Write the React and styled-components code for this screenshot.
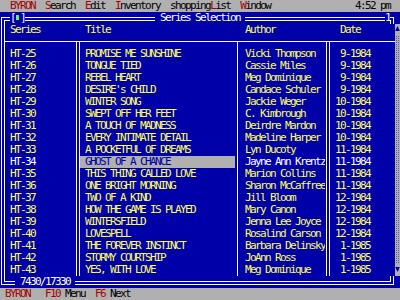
import React from 'react';
import styled, { createGlobalStyle } from 'styled-components';

const C = {
  blue: '#0000a8',
  yellow: '#ffff55',
  white: '#ffffff',
  gray: '#b0b0b0',
  red: '#a80000',
  black: '#000000',
  green: '#55ff55',
  dot: '#5858b0',
};

const seg = (x, y, w, h) =>
  `linear-gradient(${C.white}, ${C.white}) ${x}px ${y}px / ${w}px ${h}px no-repeat`;

const Global = createGlobalStyle`
  html, body { margin: 0; padding: 0; background: ${C.black}; }
  body {
    font-family: "DejaVu Sans Mono", "Liberation Mono", monospace;
    font-size: 11px;
    letter-spacing: -1.622px;
    line-height: 12px;
    white-space: pre;
  }
`;

const Screen = styled.div`
  width: 400px;
  height: 300px;
  display: flex;
  flex-direction: column;
  overflow: hidden;
  background: ${C.blue};
`;

const Bar = styled.div`
  height: 12px;
  flex: none;
  display: flex;
  align-items: center;
  background: ${C.gray};
  color: ${C.black};
`;

const MenuBar = styled(Bar)`
  padding-left: 10px;
  gap: 10px;
`;

const Hot = styled.span`
  color: ${C.red};
`;

const MenuLabel = styled.span``;

const Clock = styled.span`
  margin-left: auto;
  padding-right: 10px;
`;

const StatusBar = styled(Bar)`
  padding-left: 5px;
  gap: 10px;
`;

const Brand = styled.span`
  color: ${C.red};
  margin-right: 5px;
`;

const Window = styled.div`
  flex: 1;
  display: flex;
  flex-direction: column;
  background: ${C.blue};
  color: ${C.white};
`;

const FrameRow = styled.div`
  height: 12px;
  flex: none;
  display: flex;
`;

const corners = {
  tl: [seg(1, 5, 4, 1), seg(1, 5, 1, 7), seg(4, 8, 1, 1), seg(4, 8, 1, 4)],
  tr: [seg(0, 5, 4, 1), seg(3, 5, 1, 7), seg(0, 8, 1, 4)],
  bl: [seg(1, 0, 1, 9), seg(1, 8, 4, 1), seg(4, 0, 1, 6), seg(4, 5, 1, 1)],
  br: [seg(3, 0, 1, 9), seg(0, 8, 4, 1), seg(0, 0, 1, 6)],
};

const Corner = styled.span`
  width: 5px;
  flex: none;
  background: ${(p) => corners[p.$at].join(', ')};
`;

const HLine = styled.span`
  flex: ${(p) => (p.$w ? 'none' : '1')};
  width: ${(p) => (p.$w ? `${p.$w}px` : 'auto')};
  background: ${seg(0, 5, 9999, 1)}, ${seg(0, 8, 9999, 1)};
`;

const Blank = styled.span`
  width: 5px;
  flex: none;
`;

const Glyph = styled.span`
  width: 5px;
  flex: none;
  display: flex;
  align-items: center;
  justify-content: center;
  color: ${C.white};
`;

const CloseBox = styled.span`
  display: block;
  width: 3px;
  height: 5px;
  background: ${C.green};
  margin-top: -1px;
`;

const Caption = styled.span`
  padding: 0 5px;
  color: ${C.white};
  flex: none;
`;

const Middle = styled.div`
  flex: 1;
  display: flex;
  min-height: 0;
`;

const LeftEdge = styled.div`
  width: 5px;
  flex: none;
  background: ${seg(1, 0, 1, 9999)}, ${seg(4, 0, 1, 9999)};
`;

const Table = styled.div`
  width: 390px;
  flex: none;
  display: flex;
  flex-direction: column;
`;

const COLS = '70px 5px 155px 5px 85px 5px 65px';

const Row = styled.div`
  height: 12px;
  display: grid;
  grid-template-columns: ${COLS};
`;

const RuleRow = styled(Row)`
  background: ${seg(0, 5, 9999, 1)};
`;

const Sep = styled.span`
  background: ${(p) =>
    p.$double
      ? `${seg(1, p.$from || 0, 1, 9999)}, ${seg(4, p.$from || 0, 1, 9999)}`
      : seg(2, p.$from || 0, 1, 9999)};
`;

const Cell = styled.span`
  color: ${(p) => (p.$sel ? C.white : C.yellow)};
  padding-left: ${(p) => p.$pl ?? 5}px;
  padding-right: ${(p) => p.$pr ?? 0}px;
  text-align: ${(p) => (p.$right ? 'right' : 'left')};
  overflow: hidden;
`;

const TitleCell = styled(Cell)`
  background: ${(p) => (p.$sel ? C.gray : 'transparent')};
  color: ${(p) => (p.$sel ? C.blue : C.yellow)};
`;

const ScrollBar = styled.div`
  width: 5px;
  flex: none;
  display: flex;
  flex-direction: column;
`;

const Arrow = styled.div`
  height: 12px;
  flex: none;
  background: ${C.gray};
  display: flex;
`;

const Track = styled.div`
  flex: 1;
  background: repeating-conic-gradient(${C.dot} 0 25%, transparent 0 100%) 0 0 / 2px 2px,
    ${C.gray};
`;

const books = [
  ['HT-25', 'PROMISE ME SUNSHINE', 'Vicki Thompson', '9-1984'],
  ['HT-26', 'TONGUE TIED', 'Cassie Miles', '9-1984'],
  ['HT-27', 'REBEL HEART', 'Meg Dominique', '9-1984'],
  ['HT-28', "DESIRE's CHILD", 'Candace Schuler', '9-1984'],
  ['HT-29', 'WINTER SONG', 'Jackie Weger', '10-1984'],
  ['HT-30', 'SWEPT OFF HER FEET', 'C. Kimbrough', '10-1984'],
  ['HT-31', 'A TOUCH OF MADNESS', 'Deirdre Mardon', '10-1984'],
  ['HT-32', 'EVERY INTIMATE DETAIL', 'Madeline Harper', '10-1984'],
  ['HT-33', 'A POCKETFUL OF DREAMS', 'Lyn Ducoty', '11-1984'],
  ['HT-34', 'GHOST OF A CHANCE', 'Jayne Ann Krentz', '11-1984'],
  ['HT-35', 'THIS THING CALLED LOVE', 'Marion Collins', '11-1984'],
  ['HT-36', 'ONE BRIGHT MORNING', 'Sharon McCaffree', '11-1984'],
  ['HT-37', 'TWO OF A KIND', 'Jill Bloom', '12-1984'],
  ['HT-38', 'HOW THE GAME IS PLAYED', 'Mary Canon', '12-1984'],
  ['HT-39', 'WINTERSFIELD', 'Jenna Lee Joyce', '12-1984'],
  ['HT-40', 'LOVESPELL', 'Rosalind Carson', '12-1984'],
  ['HT-41', 'THE FOREVER INSTINCT', 'Barbara Delinsky', '1-1985'],
  ['HT-42', 'STORMY COURTSHIP', 'JoAnn Ross', '1-1985'],
  ['HT-43', 'YES, WITH LOVE', 'Meg Dominique', '1-1985'],
];

const SELECTED = 'HT-34';

function MenuItem({ label, hot }) {
  const i = label.indexOf(hot);
  return (
    <MenuLabel>
      {label.slice(0, i)}
      <Hot>{hot}</Hot>
      {label.slice(i + hot.length)}
    </MenuLabel>
  );
}

const UpIcon = () => (
  <svg width="5" height="12" viewBox="0 0 5 12">
    <polygon points="2.5,2 4.8,7 0.2,7" fill={C.blue} />
  </svg>
);

const DownIcon = () => (
  <svg width="5" height="12" viewBox="0 0 5 12">
    <polygon points="0.2,3 4.8,3 2.5,8" fill={C.blue} />
  </svg>
);

export default function App() {
  return (
    <>
      <Global />
      <Screen>
        <MenuBar>
          <Hot>BYRON</Hot>
          <MenuItem label="Search" hot="S" />
          <MenuItem label="Edit" hot="E" />
          <MenuItem label="Inventory" hot="I" />
          <MenuItem label="shoppingList" hot="L" />
          <MenuItem label="Window" hot="W" />
          <Clock>4:52 pm</Clock>
        </MenuBar>

        <Window>
          <FrameRow>
            <Corner $at="tl" />
            <HLine $w={5} />
            <Glyph>[</Glyph>
            <Glyph>
              <CloseBox />
            </Glyph>
            <Glyph>]</Glyph>
            <HLine $w={130} />
            <Caption>Series Selection</Caption>
            <HLine />
            <Glyph>1</Glyph>
            <Corner $at="tr" />
            <Blank />
          </FrameRow>

          <Middle>
            <LeftEdge />
            <Table>
              <Row>
                <Cell>Series</Cell>
                <span />
                <Cell>Title</Cell>
                <span />
                <Cell>Author</Cell>
                <span />
                <Cell $pl={10}>Date</Cell>
              </Row>
              <RuleRow>
                <span />
                <Sep $double $from={5} />
                <span />
                <Sep $from={5} />
                <span />
                <Sep $double $from={5} />
                <span />
              </RuleRow>
              {books.map(([id, title, author, date]) => {
                const sel = id === SELECTED;
                return (
                  <Row key={id}>
                    <Cell $sel={sel}>{id}</Cell>
                    <Sep $double />
                    <TitleCell $sel={sel}>{title}</TitleCell>
                    <Sep />
                    <Cell $sel={sel}>{author}</Cell>
                    <Sep $double />
                    <Cell $sel={sel} $right $pl={0} $pr={25}>
                      {date}
                    </Cell>
                  </Row>
                );
              })}
            </Table>
            <ScrollBar>
              <Arrow>
                <UpIcon />
              </Arrow>
              <Track />
              <Arrow>
                <DownIcon />
              </Arrow>
            </ScrollBar>
          </Middle>

          <FrameRow>
            <Corner $at="bl" />
            <HLine $w={10} />
            <Caption>7430/17330</Caption>
            <HLine />
            <Corner $at="br" />
            <Blank />
          </FrameRow>
        </Window>

        <StatusBar>
          <Brand>BYRON</Brand>
          <span>
            <Hot>F10</Hot> Menu
          </span>
          <span>
            <Hot>F6</Hot> Next
          </span>
        </StatusBar>
      </Screen>
    </>
  );
}
